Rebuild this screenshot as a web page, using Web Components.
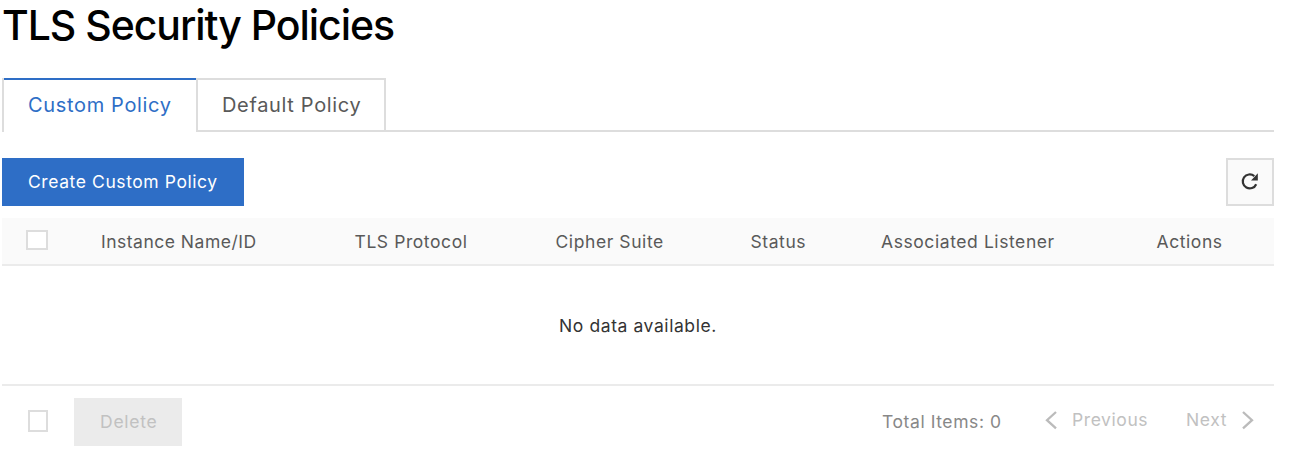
<!DOCTYPE html>
<html lang="en"><head><meta charset="utf-8"><title>TLS Security Policies</title>
<style>
body{margin:0;background:#fff;font-family:Inter,"Liberation Sans",sans-serif;font-size:17.5px;letter-spacing:.58px;color:#595959}
</style></head>
<body>
<policy-page></policy-page>
<script>
const define = (name, html) => customElements.define(name, class extends HTMLElement {
  constructor() {
    super();
    const t = document.createElement('template');
    t.innerHTML = html;
    this.attachShadow({mode: 'open'}).append(t.content.cloneNode(true));
  }
});

define('page-title', `<style>
:host{display:block;height:78px}
h1{margin:0;font-size:41px;font-weight:500;line-height:50px;letter-spacing:-1.04px;color:#000;white-space:nowrap}
</style><h1><slot></slot></h1>`);

define('policy-tab', `<style>
:host{display:block;box-sizing:border-box;height:54px;padding:0 24px;border:solid #ddd;border-width:2px 2px 2px 0;font-size:20px;line-height:50px;letter-spacing:.66px;white-space:nowrap;color:#595959}
:host([active]){width:194px;color:#2e6ec6;border-width:0 0 0 2px;background:linear-gradient(#2e6ec6,#2e6ec6) top/100% 2px no-repeat;line-height:54px}
</style><slot></slot>`);

define('tab-bar', `<style>
:host{display:flex;height:54px;margin-bottom:26px}
.rest{flex:1;border-bottom:2px solid #ddd}
::slotted(:last-child){border-left-width:2px;width:190px}
</style><slot></slot><div class="rest"></div>`);

define('action-button', `<style>
:host{display:flex;align-items:center;box-sizing:border-box;height:48px;padding:0 0 1px 26px;width:242px;background:#2e6ec6;color:#fff;white-space:nowrap}
:host([disabled]){width:108px;background:#ebebeb;color:#c1c1c1;letter-spacing:.75px}
</style><slot></slot>`);

define('refresh-button', `<style>
:host{display:grid;place-items:center;box-sizing:border-box;width:48px;height:48px;border:2px solid #ddd;background:#fafafa}
svg{display:block}
</style><svg width="44" height="44" viewBox="0 0 44 44"><path d="M28.2 24.2A7 7 0 1 1 26.3 16.1" fill="none" stroke="#333" stroke-width="2.2"/><path d="M29.8 13.2V20.5H23Z" fill="#333"/></svg>`);

define('check-box', `<style>
:host{display:block;box-sizing:border-box;width:22px;height:20px;border:2px solid #ddd;background:#fff}
:host([tall]){width:20px;height:22px}
</style>`);

define('policy-table', `<style>
:host{display:block;border-bottom:2px solid #ebebeb}
.head{display:grid;grid-template-columns:75px 253.5px 201px 195px 130.5px 275.5px 1fr;height:46px;background:#fafafa;border-bottom:2px solid #ebebeb;line-height:47px;white-space:nowrap;padding-left:24px}
.head :nth-child(2){letter-spacing:.5px}
check-box{margin-top:12px}
.empty{height:118px;line-height:119px;text-align:center;color:#333}
</style><div class="head"><check-box></check-box><span>Instance Name/ID</span><span>TLS Protocol</span><span>Cipher Suite</span><span>Status</span><span>Associated Listener</span><span>Actions</span></div><div class="empty">No data available.</div>`);

define('table-footer', `<style>
:host{display:flex;align-items:center;height:48px;padding:12px 20px 0 26px;white-space:nowrap;color:#c1c1c1}
check-box{margin-top:-2px}
action-button{margin-left:26px}
.total{margin-left:auto;color:#888;width:163px;padding-bottom:1px}
.prev,.next{display:flex;align-items:center;margin-top:-5px}
.prev{width:141px}.prev svg{margin-right:15px}
.next{justify-content:space-between;width:68px}
svg{display:block;fill:none;stroke:#bbb;stroke-width:2.3}
</style><check-box tall></check-box><action-button disabled>Delete</action-button>
<span class="total">Total Items: 0</span>
<span class="prev"><svg width="12" height="20"><path d="M11 2 2 10.2 11 18.4"/></svg>Previous</span>
<span class="next">Next<svg width="12" height="20"><path d="M1 2 10 10.2 1 18.4"/></svg></span>`);

define('policy-page', `<style>
:host{display:block;width:1272px;margin-left:2px}
.toolbar{display:flex;justify-content:space-between;margin-bottom:12px}
</style><page-title>TLS Security Policies</page-title>
<tab-bar><policy-tab active>Custom Policy</policy-tab><policy-tab>Default Policy</policy-tab></tab-bar>
<div class="toolbar"><action-button>Create Custom Policy</action-button><refresh-button></refresh-button></div>
<policy-table></policy-table><table-footer></table-footer>`);
</script>
</body></html>
